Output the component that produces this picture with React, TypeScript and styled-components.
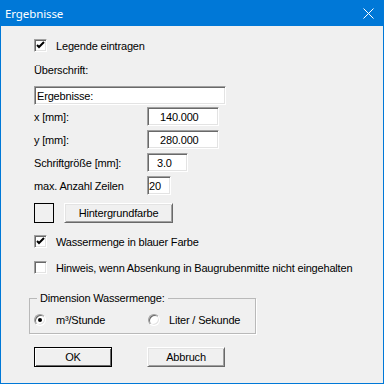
import styled, { createGlobalStyle } from 'styled-components';

const GlobalStyle = createGlobalStyle`
  html, body {
    margin: 0;
    padding: 0;
    background: #ffffff;
  }
  * {
    box-sizing: border-box;
  }
`;

const Window = styled.div`
  width: 384px;
  height: 384px;
  display: flex;
  flex-direction: column;
  border: 1px solid #0078d7;
  border-top: none;
  background: #f0f0f0;
  font-family: 'Liberation Sans', Arial, sans-serif;
  font-size: 11px;
  letter-spacing: -0.18px;
  color: #000;
`;

const TitleBar = styled.div`
  height: 26px;
  margin: 0 -1px;
  padding: 0 10px 0 5px;
  background: #0078d7;
  display: flex;
  align-items: center;
  justify-content: space-between;
  color: #fff;
  font-family: 'Noto Sans', 'Liberation Sans', sans-serif;
  font-size: 11.5px;
  letter-spacing: -0.1px;
`;

const Content = styled.div`
  padding-left: 33px;
  display: flex;
  flex-direction: column;
`;

const Row = styled.div<{ $top: number; $h: number; $gap?: number }>`
  margin-top: ${(p) => p.$top}px;
  height: ${(p) => p.$h}px;
  display: flex;
  align-items: center;
  gap: ${(p) => p.$gap ?? 0}px;
`;

const CheckBox = styled.span`
  width: 13px;
  height: 13px;
  flex: none;
  background: #fff;
  border-style: solid;
  border-width: 1px;
  border-color: #a0a0a0 #ffffff #ffffff #a0a0a0;
  box-shadow: inset 1px 1px 0 #696969, inset -1px -1px 0 #e3e3e3;
  display: flex;
  align-items: center;
  justify-content: center;
  margin-right: 9px;
`;

const Label = styled.span<{ $w?: number }>`
  white-space: nowrap;
  line-height: 14px;
  ${(p) => (p.$w ? `width: ${p.$w}px; flex: none;` : '')}
`;

const Edit = styled.div<{ $w: number; $pad: number }>`
  width: ${(p) => p.$w}px;
  height: 19px;
  padding-left: ${(p) => p.$pad}px;
  background: #fff;
  border-style: solid;
  border-width: 1px;
  border-color: #a0a0a0 #ffffff #ffffff #a0a0a0;
  box-shadow: inset 1px 1px 0 #696969, inset -1px -1px 0 #e3e3e3;
  display: flex;
  align-items: center;
  white-space: nowrap;
`;

const Swatch = styled.span`
  width: 20px;
  height: 20px;
  border: 1px solid #000;
  margin-right: 10px;
`;

const Button = styled.div<{ $w: number; $default?: boolean }>`
  width: ${(p) => p.$w}px;
  height: 20px;
  background: #f0f0f0;
  border-style: solid;
  border-width: 1px;
  border-color: ${(p) => (p.$default ? '#000' : '#fff #696969 #696969 #fff')};
  box-shadow: ${(p) =>
    p.$default
      ? 'inset 1px 1px 0 #fff, inset -1px -1px 0 #696969'
      : 'inset 1px 1px 0 #e3e3e3, inset -1px -1px 0 #a0a0a0'};
  display: flex;
  align-items: center;
  justify-content: center;
`;

const Group = styled.fieldset`
  margin: 17px 0 0 -5px;
  padding: 0;
  width: 227px;
  height: 43px;
  border: 1px solid #b9b9b9;
  box-shadow: 1px 1px 0 #fff;
  display: flex;
  align-items: flex-start;
`;

const Legend = styled.legend`
  margin-left: 7px;
  padding: 0 3px;
  line-height: 14px;
  height: 14px;
`;

const RadioRow = styled.div`
  margin-top: 8px;
  padding-left: 4px;
  display: flex;
  align-items: center;
  height: 14px;
  width: 100%;
`;

const RadioItem = styled.div<{ $w?: number }>`
  display: flex;
  align-items: center;
  ${(p) => (p.$w ? `width: ${p.$w}px;` : '')}
`;

const Radio = styled.span<{ $gap: number }>`
  width: 12px;
  height: 12px;
  flex: none;
  border-radius: 50%;
  background: #fff;
  border-style: solid;
  border-width: 1px;
  border-color: #a0a0a0 #ffffff #ffffff #a0a0a0;
  box-shadow: inset 1px 1px 0 #696969, inset -1px -1px 0 #e3e3e3;
  display: flex;
  align-items: center;
  justify-content: center;
  margin-right: ${(p) => p.$gap}px;
`;

const Dot = styled.span`
  width: 4px;
  height: 4px;
  border-radius: 50%;
  background: #000;
`;

function Check({ checked }: { checked: boolean }) {
  return (
    <CheckBox>
      {checked && (
        <svg width="9" height="9" viewBox="0 0 9 9">
          <path d="M1 4 L3 6 L8 1" stroke="#000" strokeWidth="2" fill="none" />
        </svg>
      )}
    </CheckBox>
  );
}

export default function App() {
  return (
    <>
      <GlobalStyle />
      <Window>
        <TitleBar>
          <span>Ergebnisse</span>
          <svg width="11" height="11" viewBox="0 0 11 11">
            <path d="M0.5 0.5 L10.5 10.5 M10.5 0.5 L0.5 10.5" stroke="#fff" strokeWidth="1" />
          </svg>
        </TitleBar>
        <Content>
          <Row $top={13} $h={13}>
            <Check checked />
            <Label>Legende eintragen</Label>
          </Row>
          <Row $top={11} $h={14}>
            <Label>Überschrift:</Label>
          </Row>
          <Row $top={9} $h={19}>
            <Edit $w={192} $pad={2}>Ergebnisse:</Edit>
          </Row>
          <Row $top={2} $h={19}>
            <Label $w={113}>x [mm]:</Label>
            <Edit $w={72} $pad={12}>140.000</Edit>
          </Row>
          <Row $top={4} $h={19}>
            <Label $w={113}>y [mm]:</Label>
            <Edit $w={72} $pad={12}>280.000</Edit>
          </Row>
          <Row $top={4} $h={19}>
            <Label $w={113}>Schriftgröße [mm]:</Label>
            <Edit $w={41} $pad={9}>3.0</Edit>
          </Row>
          <Row $top={4} $h={19}>
            <Label $w={113}>max. Anzahl Zeilen</Label>
            <Edit $w={24} $pad={1}>20</Edit>
          </Row>
          <Row $top={8} $h={20}>
            <Swatch />
            <Button $w={109}>Hintergrundfarbe</Button>
          </Row>
          <Row $top={12} $h={13}>
            <Check checked />
            <Label>Wassermenge in blauer Farbe</Label>
          </Row>
          <Row $top={13} $h={13}>
            <Check checked={false} />
            <Label>Hinweis, wenn Absenkung in Baugrubenmitte nicht eingehalten</Label>
          </Row>
          <Group>
            <Legend>Dimension Wassermenge:</Legend>
            <RadioRow>
              <RadioItem $w={114}>
                <Radio $gap={10}>
                  <Dot />
                </Radio>
                <Label>m³/Stunde</Label>
              </RadioItem>
              <RadioItem>
                <Radio $gap={9} />
                <Label>Liter / Sekunde</Label>
              </RadioItem>
            </RadioRow>
          </Group>
          <Row $top={13} $h={20} $gap={35}>
            <Button $w={78} $default>
              OK
            </Button>
            <Button $w={78}>Abbruch</Button>
          </Row>
        </Content>
      </Window>
    </>
  );
}
